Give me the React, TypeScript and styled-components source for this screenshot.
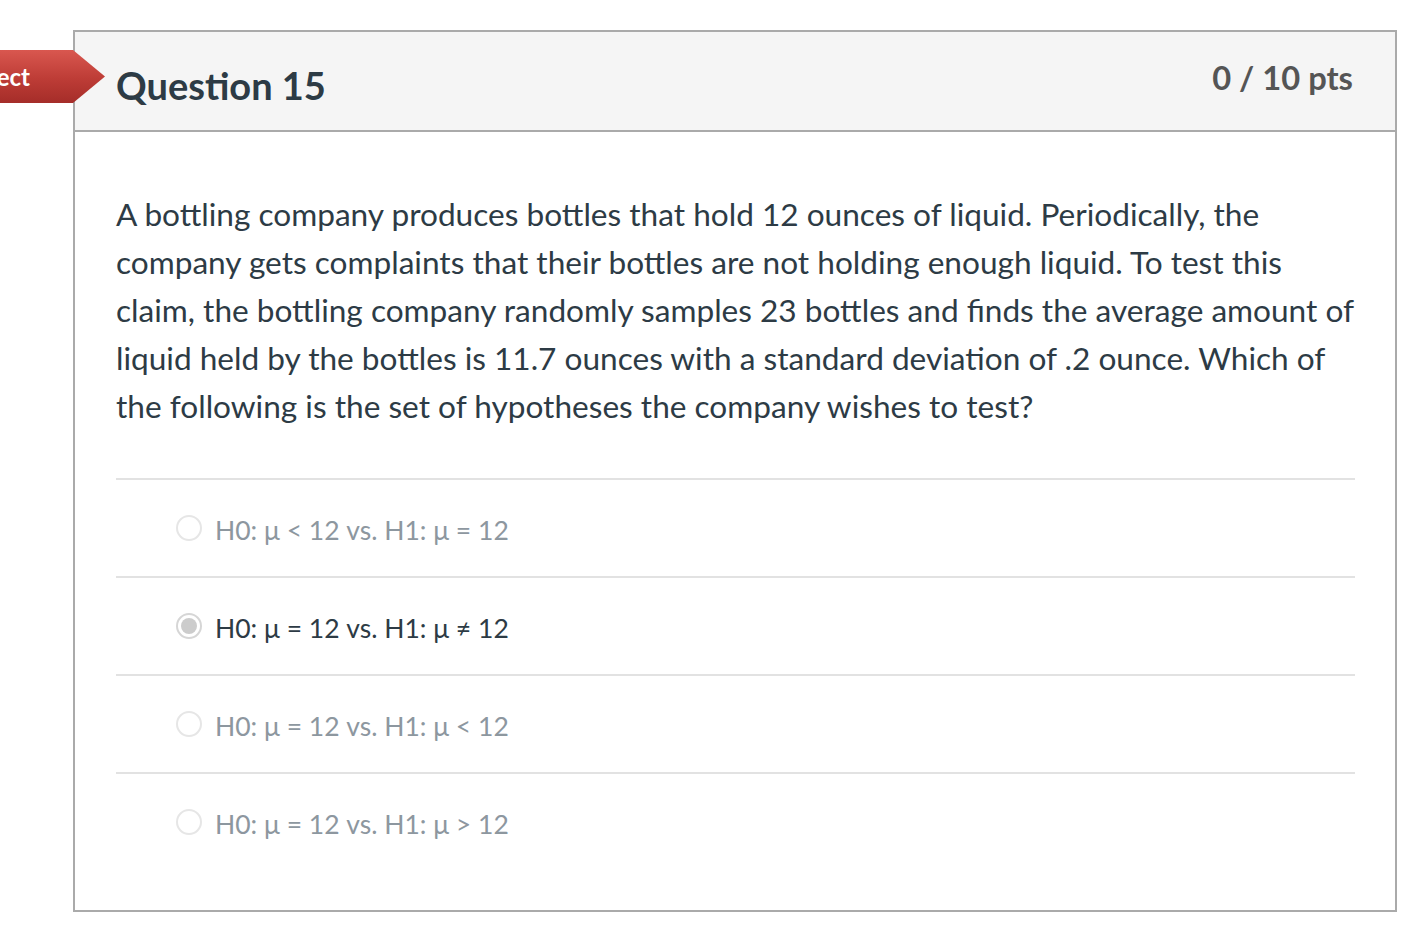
import React from "react";
import styled, { createGlobalStyle } from "styled-components";

const Global = createGlobalStyle`
  html, body { margin: 0; padding: 0; background: #fff; overflow: hidden; }
  body { font-family: Lato, "Open Sans", "Liberation Sans", sans-serif; }
`;

const Page = styled.div`
  position: relative;
  width: 1419px;
  height: 928px;
  padding: 30px 0 0 73px;
  box-sizing: border-box;
`;

const Badge = styled.div`
  position: absolute;
  top: 50px;
  left: -95px;
  width: 200px;
  height: 53px;
  box-sizing: border-box;
  padding-right: 75px;
  display: flex;
  align-items: center;
  justify-content: flex-end;
  color: #fff;
  font-size: 24px;
  font-weight: 700;
  background: linear-gradient(#d9574f, #bd3c36 55%, #a52d29);
  clip-path: polygon(0 0, 168px 0, 200px 50%, 168px 100%, 0 100%);
  z-index: 2;
`;

const Card = styled.div`
  width: 1324px;
  height: 882px;
  box-sizing: border-box;
  border: 2px solid #aaaaaa;
  display: flex;
  flex-direction: column;
`;

const Header = styled.div`
  height: 100px;
  box-sizing: border-box;
  background: #f5f5f5;
  border-bottom: 2px solid #aaaaaa;
  display: flex;
  justify-content: space-between;
  align-items: flex-start;
  padding: 0 42px 0 41px;
`;

const Title = styled.h2`
  margin: 33px 0 0;
  font-size: 38px;
  line-height: 40px;
  font-weight: 700;
  color: #2d3b45;
`;

const Points = styled.div`
  margin-top: 26px;
  font-size: 32.7px;
  line-height: 40px;
  font-weight: 700;
  color: #555555;
`;

const Body = styled.div`
  padding: 58px 36px 0 41px;
`;

const QuestionText = styled.p`
  margin: 0;
  font-size: 31.6px;
  line-height: 48px;
  color: #2d3b45;
`;

const Answers = styled.div`
  margin-top: 48px;
  margin-right: 4px;
`;

const AnswerRow = styled.label`
  height: 98px;
  box-sizing: border-box;
  border-top: 2px solid #e2e2e2;
  display: flex;
  align-items: center;
  padding-left: 60px;
  gap: 13px;
`;

const Radio = styled.span<{ $checked?: boolean }>`
  width: 26px;
  height: 26px;
  box-sizing: border-box;
  border-radius: 50%;
  border: 2px solid ${(p) => (p.$checked ? "#d6d6d6" : "#e6e6e6")};
  background: #fff;
  display: flex;
  align-items: center;
  justify-content: center;
  &::after {
    content: "";
    width: 16px;
    height: 16px;
    border-radius: 50%;
    background: ${(p) => (p.$checked ? "#cccccc" : "transparent")};
  }
`;

const AnswerText = styled.span<{ $checked?: boolean }>`
  padding-top: 4px;
  font-size: 26.5px;
  color: ${(p) => (p.$checked ? "#2d3b45" : "#8d979f")};
`;

const answers = [
  { text: "H0: μ < 12 vs. H1: μ = 12", checked: false },
  { text: "H0: μ = 12 vs. H1: μ ≠ 12", checked: true },
  { text: "H0: μ = 12 vs. H1: μ < 12", checked: false },
  { text: "H0: μ = 12 vs. H1: μ > 12", checked: false },
];

export default function App() {
  return (
    <>
      <Global />
      <Page>
        <Badge>Incorrect</Badge>
        <Card>
          <Header>
            <Title>Question 15</Title>
            <Points>0 / 10 pts</Points>
          </Header>
          <Body>
            <QuestionText>
              A bottling company produces bottles that hold 12 ounces of liquid. Periodically, the
              company gets complaints that their bottles are not holding enough liquid. To test this
              claim, the bottling company randomly samples 23 bottles and finds the average amount of
              liquid held by the bottles is 11.7 ounces with a standard deviation of .2 ounce. Which of
              the following is the set of hypotheses the company wishes to test?
            </QuestionText>
            <Answers>
              {answers.map((a, i) => (
                <AnswerRow key={i}>
                  <Radio $checked={a.checked} />
                  <AnswerText $checked={a.checked}>{a.text}</AnswerText>
                </AnswerRow>
              ))}
            </Answers>
          </Body>
        </Card>
      </Page>
    </>
  );
}
